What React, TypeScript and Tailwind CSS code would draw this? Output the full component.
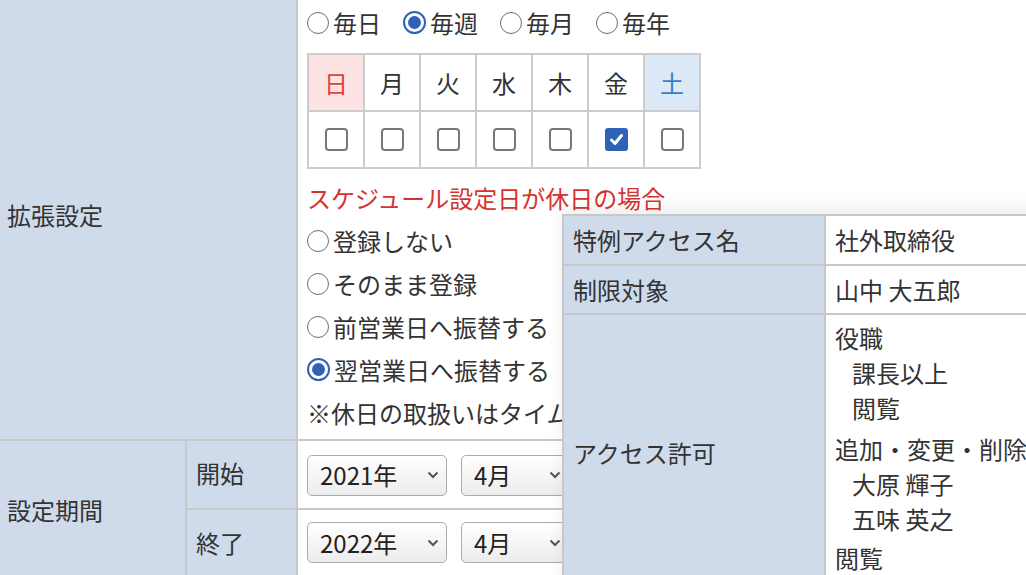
import React from "react";

const Radio = ({ checked = false }: { checked?: boolean }) =>
  checked ? (
    <span className="w-[23px] h-[23px] shrink-0 rounded-full border-2 border-[#2f62b6] bg-white flex items-center justify-center">
      <span className="w-[13px] h-[13px] rounded-full bg-[#2f62b6]" />
    </span>
  ) : (
    <span className="w-[22px] h-[22px] shrink-0 rounded-full border-[1.5px] border-[#6f6f6f] bg-white" />
  );

const RadioItem = ({ label, checked = false }: any) => (
  <div className="flex items-center gap-[4px] h-[43px] whitespace-nowrap">
    <Radio checked={checked} />
    <span>{label}</span>
  </div>
);

const Checkbox = ({ checked = false }: { checked?: boolean }) =>
  checked ? (
    <span className="w-[23px] h-[23px] rounded-[3px] bg-[#2f62b6] flex items-center justify-center">
      <svg width="17" height="17" viewBox="0 0 17 17">
        <path d="M3.5 9 L7 12.5 L13.5 4.5" fill="none" stroke="white" strokeWidth="3" strokeLinecap="round" strokeLinejoin="round" />
      </svg>
    </span>
  ) : (
    <span className="w-[23px] h-[23px] rounded-[4px] border-2 border-[#777] bg-white" />
  );

const Select = ({ value, width }: any) => (
  <div
    className={`${width} h-[41px] shrink-0 rounded-[5px] border-[1.5px] border-[#ababab] bg-gradient-to-b from-white to-[#ececec] flex items-center justify-between pl-[12px] pr-[7px] text-[#222]`}
  >
    <span>{value}</span>
    <svg width="12" height="8" viewBox="0 0 12 8">
      <polyline points="1.5,1.5 6,6 10.5,1.5" fill="none" stroke="#555" strokeWidth="2" />
    </svg>
  </div>
);

const days = [
  { d: "日", cls: "bg-[#fde3e3] text-[#e5403a]", checked: false },
  { d: "月", cls: "bg-white", checked: false },
  { d: "火", cls: "bg-white", checked: false },
  { d: "水", cls: "bg-white", checked: false },
  { d: "木", cls: "bg-white", checked: false },
  { d: "金", cls: "bg-white", checked: true },
  { d: "土", cls: "bg-[#dce9f7] text-[#3d7ccd]", checked: false },
];

export default function App() {
  return (
    <div className="relative w-[1026px] h-[575px] overflow-hidden bg-white text-[24px] text-[#333] font-['Noto_Sans_CJK_JP','Noto_Sans',sans-serif]">
      <div className="-mt-[9px] w-[1026px]">
        {/* 拡張設定 */}
        <div className="flex h-[450px] border-b-2 border-[#c8c8c8]">
          <div className="w-[298px] shrink-0 bg-[#cfdbea] border-r-2 border-[#c8c8c8] flex items-center pl-[7px]">
            拡張設定
          </div>
          <div className="flex-1 pl-[9px] pt-[10px]">
            <div className="flex items-center gap-[22px] h-[43px]">
              <RadioItem label="毎日" />
              <RadioItem label="毎週" checked />
              <RadioItem label="毎月" />
              <RadioItem label="毎年" />
            </div>
            <div className="mt-[9px] w-[394px] border-t-2 border-l-2 border-[#cccccc]">
              <div className="flex">
                {days.map((x) => (
                  <div
                    key={x.d}
                    className={`w-[56px] h-[57px] border-r-2 border-b-2 border-[#cccccc] flex items-center justify-center ${x.cls}`}
                  >
                    {x.d}
                  </div>
                ))}
              </div>
              <div className="flex">
                {days.map((x) => (
                  <div
                    key={x.d}
                    className="w-[56px] h-[57px] border-r-2 border-b-2 border-[#cccccc] flex items-center justify-center"
                  >
                    <Checkbox checked={x.checked} />
                  </div>
                ))}
              </div>
            </div>
            <div className="mt-[7px] leading-[43px] text-[#d6332e] whitespace-nowrap">
              スケジュール設定日が休日の場合
            </div>
            <RadioItem label="登録しない" />
            <RadioItem label="そのまま登録" />
            <RadioItem label="前営業日へ振替する" />
            <RadioItem label="翌営業日へ振替する" checked />
            <div className="leading-[43px] whitespace-nowrap">※休日の取扱いはタイムカード設定に従います</div>
          </div>
        </div>

        {/* 設定期間 */}
        <div className="flex">
          <div className="w-[187px] shrink-0 bg-[#cfdbea] border-r-2 border-[#c8c8c8] flex items-center pl-[7px]">
            設定期間
          </div>
          <div className="flex-1">
            <div className="flex h-[69px] border-b-2 border-[#c8c8c8]">
              <div className="w-[111px] shrink-0 bg-[#cfdbea] border-r-2 border-[#c8c8c8] flex items-center pl-[9px] pb-[4px]">
                開始
              </div>
              <div className="flex-1 flex items-center gap-[14px] pl-[9px] pt-[1px]">
                <Select value="2021年" width="w-[140px]" />
                <Select value="4月" width="w-[108px]" />
              </div>
            </div>
            <div className="flex h-[69px]">
              <div className="w-[111px] shrink-0 bg-[#cfdbea] border-r-2 border-[#c8c8c8] flex items-center pl-[9px] pb-[4px]">
                終了
              </div>
              <div className="flex-1 flex items-center gap-[14px] pl-[9px] pb-[4px]">
                <Select value="2022年" width="w-[140px]" />
                <Select value="4月" width="w-[108px]" />
              </div>
            </div>
          </div>
        </div>
      </div>

      {/* 特例アクセス */}
      <div className="absolute left-[562px] top-[214px] w-[480px] bg-white border-t-2 border-l-2 border-[#c8c8c8] shadow-[0_-6px_14px_rgba(0,0,0,0.07)]">
        <div className="flex h-[50px] border-b-2 border-[#c8c8c8]">
          <div className="w-[262px] shrink-0 bg-[#cfdbea] border-r-2 border-[#c8c8c8] flex items-center pl-[9px]">
            特例アクセス名
          </div>
          <div className="flex-1 flex items-center pl-[9px]">社外取締役</div>
        </div>
        <div className="flex h-[49px] border-b-2 border-[#c8c8c8]">
          <div className="w-[262px] shrink-0 bg-[#cfdbea] border-r-2 border-[#c8c8c8] flex items-center pl-[9px]">
            制限対象
          </div>
          <div className="flex-1 flex items-center pl-[9px]">山中 大五郎</div>
        </div>
        <div className="flex h-[280px]">
          <div className="w-[262px] shrink-0 bg-[#cfdbea] border-r-2 border-[#c8c8c8] flex items-center pl-[9px] pb-[4px]">
            アクセス許可
          </div>
          <div className="flex-1 pl-[9px] pt-[5px] leading-[35px] whitespace-nowrap">
            <div>役職</div>
            <div className="pl-[17px]">課長以上</div>
            <div className="pl-[17px]">閲覧</div>
            <div className="mt-[6px]">追加・変更・削除</div>
            <div className="pl-[17px]">大原 輝子</div>
            <div className="pl-[17px]">五味 英之</div>
            <div className="mt-[4px]">閲覧</div>
          </div>
        </div>
      </div>
    </div>
  );
}
